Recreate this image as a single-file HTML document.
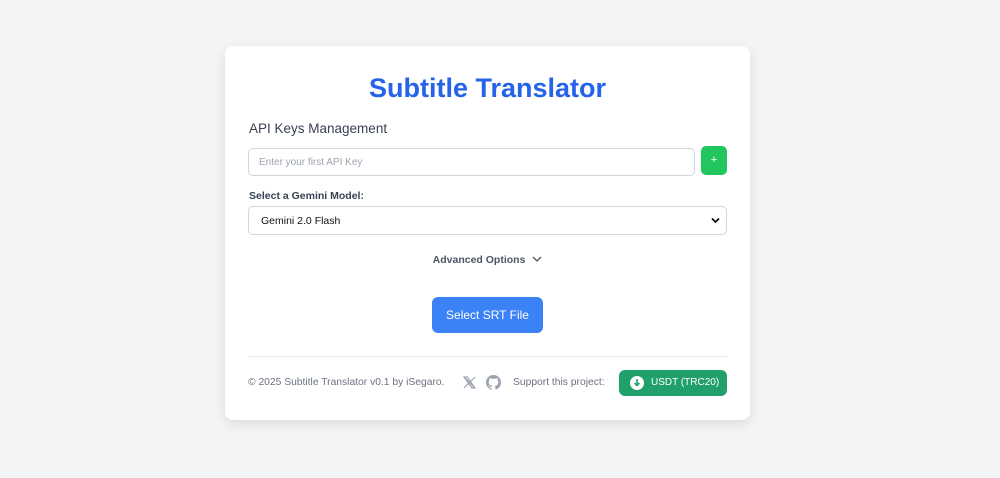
<!DOCTYPE html>
<html><head><style>
*{box-sizing:border-box;margin:0;padding:0}
body{width:1000px;height:478px;background:#f3f4f6;font-family:"Liberation Sans",sans-serif;position:relative;overflow:hidden}
.card{position:absolute;left:225px;top:46px;width:525px;height:374px;background:#fff;border-radius:8px;box-shadow:0 4px 12px rgba(0,0,0,.1)}
h1{position:absolute;top:27px;left:0;width:100%;text-align:center;color:#2563eb;font-size:27px;font-weight:bold}
.abs{position:absolute}
.h2{left:24px;top:75px;font-size:13.5px;color:#374151}
.inp{left:23px;top:102px;width:447px;height:28px;border:1px solid #d1d5db;border-radius:5px;font-size:10px;color:#9ca3af;padding:8px 10px}
.plus{left:476px;top:100px;width:26px;height:29px;background:#22c55e;border-radius:5px;color:#fff;font-size:11px;text-align:center;line-height:29px}
.lbl{left:24px;top:144px;font-size:10.5px;color:#374151;font-weight:bold}
.sel{left:23px;top:160px;width:479px;height:29px;border:1px solid #d1d5db;border-radius:5px;font-size:10.5px;color:#111;padding:8px 12px}
.adv{left:0;width:100%;top:208px;text-align:center;font-size:10.5px;color:#4b5563;font-weight:bold}
.btn{left:207px;top:251px;width:111px;height:36px;background:#3b82f6;border-radius:6px;color:#fff;font-size:12px;text-align:center;line-height:36px}
.hr{left:23px;top:310px;width:479px;height:1px;background:#e5e7eb}
.ft{top:331px;font-size:10.3px;color:#6b7280}
.usdt{left:394px;top:324px;width:108px;height:26px;background:#22a06b;border-radius:6px;color:#fff;font-size:10px;line-height:26px;padding-left:32px}
</style></head><body>
<div class="card">
<h1>Subtitle Translator</h1>
<div class="abs h2">API Keys Management</div>
<div class="abs inp">Enter your first API Key</div>
<div class="abs plus">+</div>
<div class="abs lbl">Select a Gemini Model:</div>
<div class="abs sel">Gemini 2.0 Flash<svg style="position:absolute;right:6px;top:10px" width="9" height="7" viewBox="0 0 9 7"><path d="M1 1.5l3.5 3.5 3.5-3.5" stroke="#111" stroke-width="1.8" fill="none"/></svg></div>
<div class="abs adv">Advanced Options <svg width="10" height="8" viewBox="0 0 10 8" style="margin-left:4px"><path d="M1 2l4 4 4-4" stroke="#4b5563" stroke-width="1.3" fill="none"/></svg></div>
<div class="abs btn">Select SRT File</div>
<div class="abs hr"></div>
<div class="abs ft" style="left:23px">© 2025 Subtitle Translator v0.1 by iSegaro.</div>
<svg class="abs" style="left:238px;top:330px" width="13" height="13" viewBox="0 0 13 13"><path d="M1 1l11 11M12 1L1 12M1 1h3l8 11h-3z" stroke="#9ca3af" stroke-width="1.2" fill="none"/></svg>
<svg class="abs" style="left:261px;top:329px" width="15" height="15" viewBox="0 0 16 16"><path fill="#9ca3af" d="M8 0C3.58 0 0 3.580 0 8c0 3.54 2.290 6.530 5.470 7.590.4.07.55-.17.55-.38v-1.33c-2.230.48-2.700-1.070-2.700-1.070-.36-.93-.89-1.170-.89-1.170-.73-.5.06-.49.06-.49.8.06 1.230.83 1.230.83.71 1.230 1.870.87 2.330.66.07-.52.28-.87.5-1.070-1.780-.2-3.640-.89-3.640-3.950 0-.87.31-1.590.82-2.150-.08-.2-.36-1.020.08-2.120 0 0 .67-.21 2.200.82a7.600 7.600 0 014 0c1.530-1.040 2.200-.82 2.200-.82.44 1.100.16 1.920.08 2.120.51.56.82 1.270.82 2.150 0 3.070-1.870 3.750-3.650 3.950.29.25.54.73.54 1.480v2.200c0 .21.15.46.55.38A8.010 8.010 0 0016 8c0-4.420-3.580-8-8-8z"/></svg>
<div class="abs ft" style="left:288px">Support this project:</div>
<div class="abs usdt"><svg style="position:absolute;left:11px;top:6px" width="14" height="14" viewBox="0 0 14 14"><circle cx="7" cy="7" r="7" fill="#fff"/><path d="M7 3v6M4.5 7L7 9.5 9.5 7" stroke="#22a06b" stroke-width="1.6" fill="none"/></svg>USDT (TRC20)</div>
</div>
</body></html>
